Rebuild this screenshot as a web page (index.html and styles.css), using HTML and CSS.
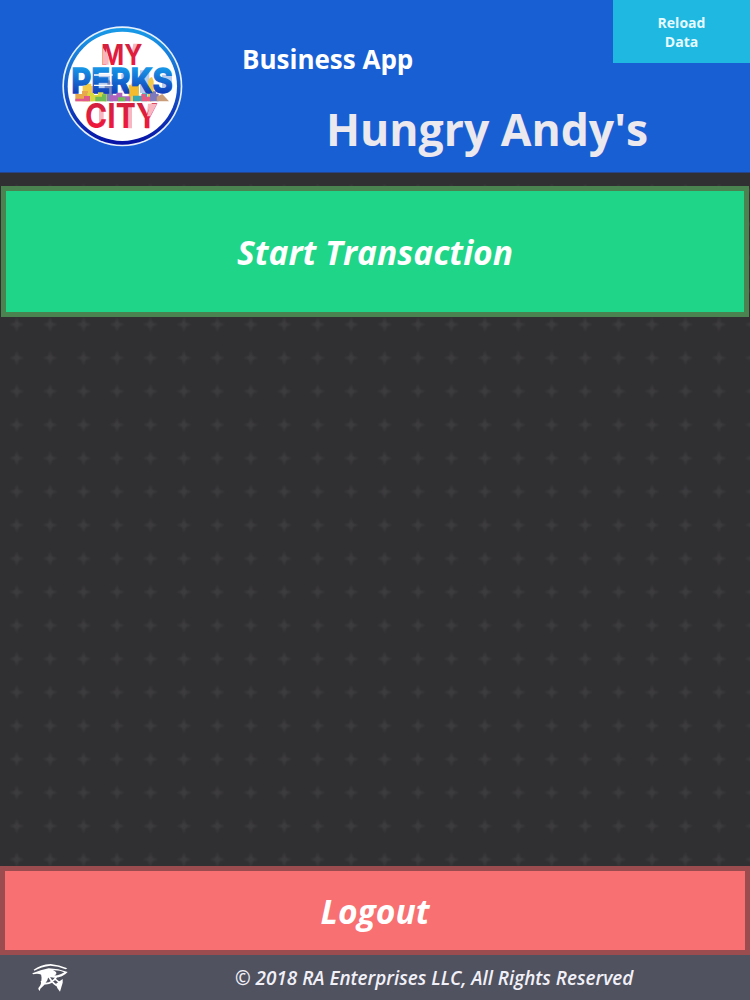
FILE: index.html
```
<!DOCTYPE html>
<html lang="en">
<head>
    <meta charset="utf-8">
    <title>Business App</title>
    <link rel="stylesheet" href="styles.css">
</head>
<body>
    <header class="header">
        <svg class="logo" viewBox="22 19 363 363">
            <defs>
                <linearGradient id="ring" x1="0" y1="0" x2="0" y2="1">
                    <stop offset="0" stop-color="#189be8"/>
                    <stop offset="0.45" stop-color="#1763cf"/>
                    <stop offset="1" stop-color="#0711a5"/>
                </linearGradient>
                <linearGradient id="perks" x1="0" y1="0" x2="0" y2="1">
                    <stop offset="0.2" stop-color="#1694e6"/>
                    <stop offset="0.85" stop-color="#1237b5"/>
                </linearGradient>
                <linearGradient id="red" x1="0" y1="0" x2="0" y2="1">
                    <stop offset="0.2" stop-color="#d3213f"/>
                    <stop offset="0.9" stop-color="#f5163c"/>
                </linearGradient>
            </defs>
            <circle cx="203" cy="200" r="180" fill="#e6f1fb"/>
            <circle cx="203" cy="200" r="175" fill="url(#ring)"/>
            <circle cx="203" cy="200" r="164" fill="#fff"/>
            <path class="shade-red" d="M236 72h25l-22 36h-10zM133 258h14v62h-14zM216 262h16v64h-16zM280 252h28l-24 46v29h-12z"/>
            <path class="shade-blue" d="M122 163h44v52h-44zM200 163h14v50h-14zM256 152h28v68h-28zM322 165h30v45h-30z"/>
            <path fill="#f3c94a" d="M84 245v-46h8v-7h18v7h6v46zM222 245v-50h7l9-20 9 20h6v50zM280 245v-60l5-10 7-3 5 12v61z"/>
            <path fill="#7887bd" d="M150 245v-48h8v-10l5-8 4 8v10h8v48z"/>
            <text class="logo-red" x="139" y="135" font-size="84" textLength="124" lengthAdjust="spacingAndGlyphs">MY</text>
            <path class="shade-red" d="M145 84l17 28v23h-17z"/>
            <text class="logo-blue" x="50" y="221" font-size="102" textLength="304" lengthAdjust="spacingAndGlyphs">PERKS</text>
            <path class="logo-cut" d="M118 166h56M118 197h56"/>
            <path fill="#e9a84b" d="M62 245v-22h20v-9h18v31z"/>
            <path fill="#d8d940" d="M98 245v-25h20v6h12v-8h16v6h10v21z"/>
            <path fill="#b064bd" d="M165 245v-18h20v-8h18v11h24v15z"/>
            <path fill="#f3bb2d" d="M224 230v-30h26v30z"/>
            <path fill="#35a9b7" d="M235 245v-17h27v-7h16v24z"/>
            <path fill="#e65b82" d="M260 245v-22h13v8h17v14z"/>
            <path fill="#7e78bd" d="M286 245v-24h9v-6h9v7h8v23z"/>
            <path fill="#c99d79" d="M306 245v-14l17-8 20 22z"/>
            <path fill="#6fbd55" d="M122 245v-14h20v-7h12v21zM190 245v-12h22v12z"/>
            <path fill="#e0588b" d="M62 245v-8h26v-8h18v16z"/>
            <text class="logo-red" x="91" y="326" font-size="102" textLength="219" lengthAdjust="spacingAndGlyphs">CITY</text>
            <path class="shade-red" d="M287 252h20l-20 38h-10z"/>
        </svg>
        <div class="titles">
            <h2 class="app-name">Business App</h2>
            <h1 class="business-name">Hungry Andy's</h1>
        </div>
        <button class="reload">Reload<br>Data</button>
    </header>

    <main class="content">
        <button class="button start">Start Transaction</button>
        <button class="button logout">Logout</button>
    </main>

    <footer class="footer">
        <svg class="eye" viewBox="0 0 108 90">
            <path d="M5 20Q25 5 56 3Q82 5 106 16L101 19Q78 9 55 8Q28 11 7 23z"/>
            <path fill-rule="evenodd" d="M1 31Q27 20 50 16Q78 17 107 27Q91 45 66 44Q52 41 44 46Q38 54 33 54L28 35Q17 30 3 34zM63 22Q74 26 73 32Q70 39 61 38L76 37Q88 34 97 28Q83 21 63 22z"/>
            <path d="M28 30L50 38L46 52Q38 68 25 77L23 84Q16 77 21 73Q31 65 28 30z"/>
            <path class="line" d="M49 39Q66 68 82 70M73 42Q61 61 41 62Q31 63 28 54M69 48Q80 59 90 60"/>
            <path d="M72 62L92 48V59L84 86Q74 77 72 62z"/>
        </svg>
        <p class="copyright">© 2018 RA Enterprises LLC, All Rights Reserved</p>
    </footer>
</body>
</html>
```

FILE: styles.css
```
* {
    box-sizing: border-box;
}
body {
    margin: 0;
    height: 100vh;
    display: flex;
    flex-direction: column;
    overflow: hidden;
    background: #302f31;
    color: #fff;
    font-family: "Open Sans", sans-serif;
}
h1, h2, p {
    margin: 0;
}
button {
    font-family: inherit;
    color: #fff;
    cursor: pointer;
}
.header {
    display: flex;
    align-items: flex-start;
    height: 173px;
    background: #195fd4;
    border-bottom: 1px solid #27448a;
}
.logo {
    width: 121px;
    height: 121px;
    margin: 26px 0 0 62px;
    flex: none;
}
.logo text {
    font-family: Inter, sans-serif;
    font-weight: 700;
}
.logo-red {
    fill: url(#red);
}
.logo-blue {
    fill: url(#perks);
    stroke: url(#perks);
    stroke-width: 4;
}
.shade-red {
    fill: #f8b6c0;
}
.shade-blue {
    fill: #b9cbed;
}
.logo-cut {
    fill: none;
    stroke: #fff;
    stroke-width: 4;
}
.titles {
    width: 430px;
    padding-top: 41px;
    padding-left: 59px;
    flex: none;
}
.app-name {
    font-size: 26px;
    line-height: 36px;
    font-weight: 700;
}
.business-name {
    margin: 21px 0 0 84px;
    font-size: 44.5px;
    line-height: 62px;
    font-weight: 700;
    color: #ebe8ee;
    white-space: nowrap;
}
.reload {
    width: 137px;
    height: 63px;
    flex: none;
    border: 0;
    background: #1fb8e0;
    font-size: 14px;
    line-height: 19px;
    font-weight: 700;
    color: #e6faff;
}
.content {
    flex: 1;
    display: flex;
    flex-direction: column;
    justify-content: space-between;
    padding-top: 13px;
    background-image:
        radial-gradient(ellipse 8px 3px, #3c3b3e 25%, transparent),
        radial-gradient(ellipse 3px 8px, #3c3b3e 25%, transparent);
    background-size: 33.45px 33.45px;
    background-position: 0 1px;
}
.button {
    width: 100%;
    font-size: 33.6px;
    font-weight: 700;
    font-style: italic;
}
.start {
    width: auto;
    height: 131px;
    margin: 0 1px;
    border: 5px solid #4a8350;
    background: #1ed588;
}
.logout {
    height: 89px;
    border: 5px solid #9a4c4e;
    background: #f87071;
}
.footer {
    display: flex;
    align-items: center;
    height: 45px;
    background: #50525f;
}
.eye {
    width: 36px;
    height: 30px;
    margin-left: 32px;
    fill: #fff;
}
.eye .line {
    fill: none;
    stroke: #fff;
    stroke-width: 5;
}
.copyright {
    margin-left: 167px;
    font-size: 18.9px;
    font-weight: 600;
    font-style: italic;
    color: #f1f0f8;
}
```
